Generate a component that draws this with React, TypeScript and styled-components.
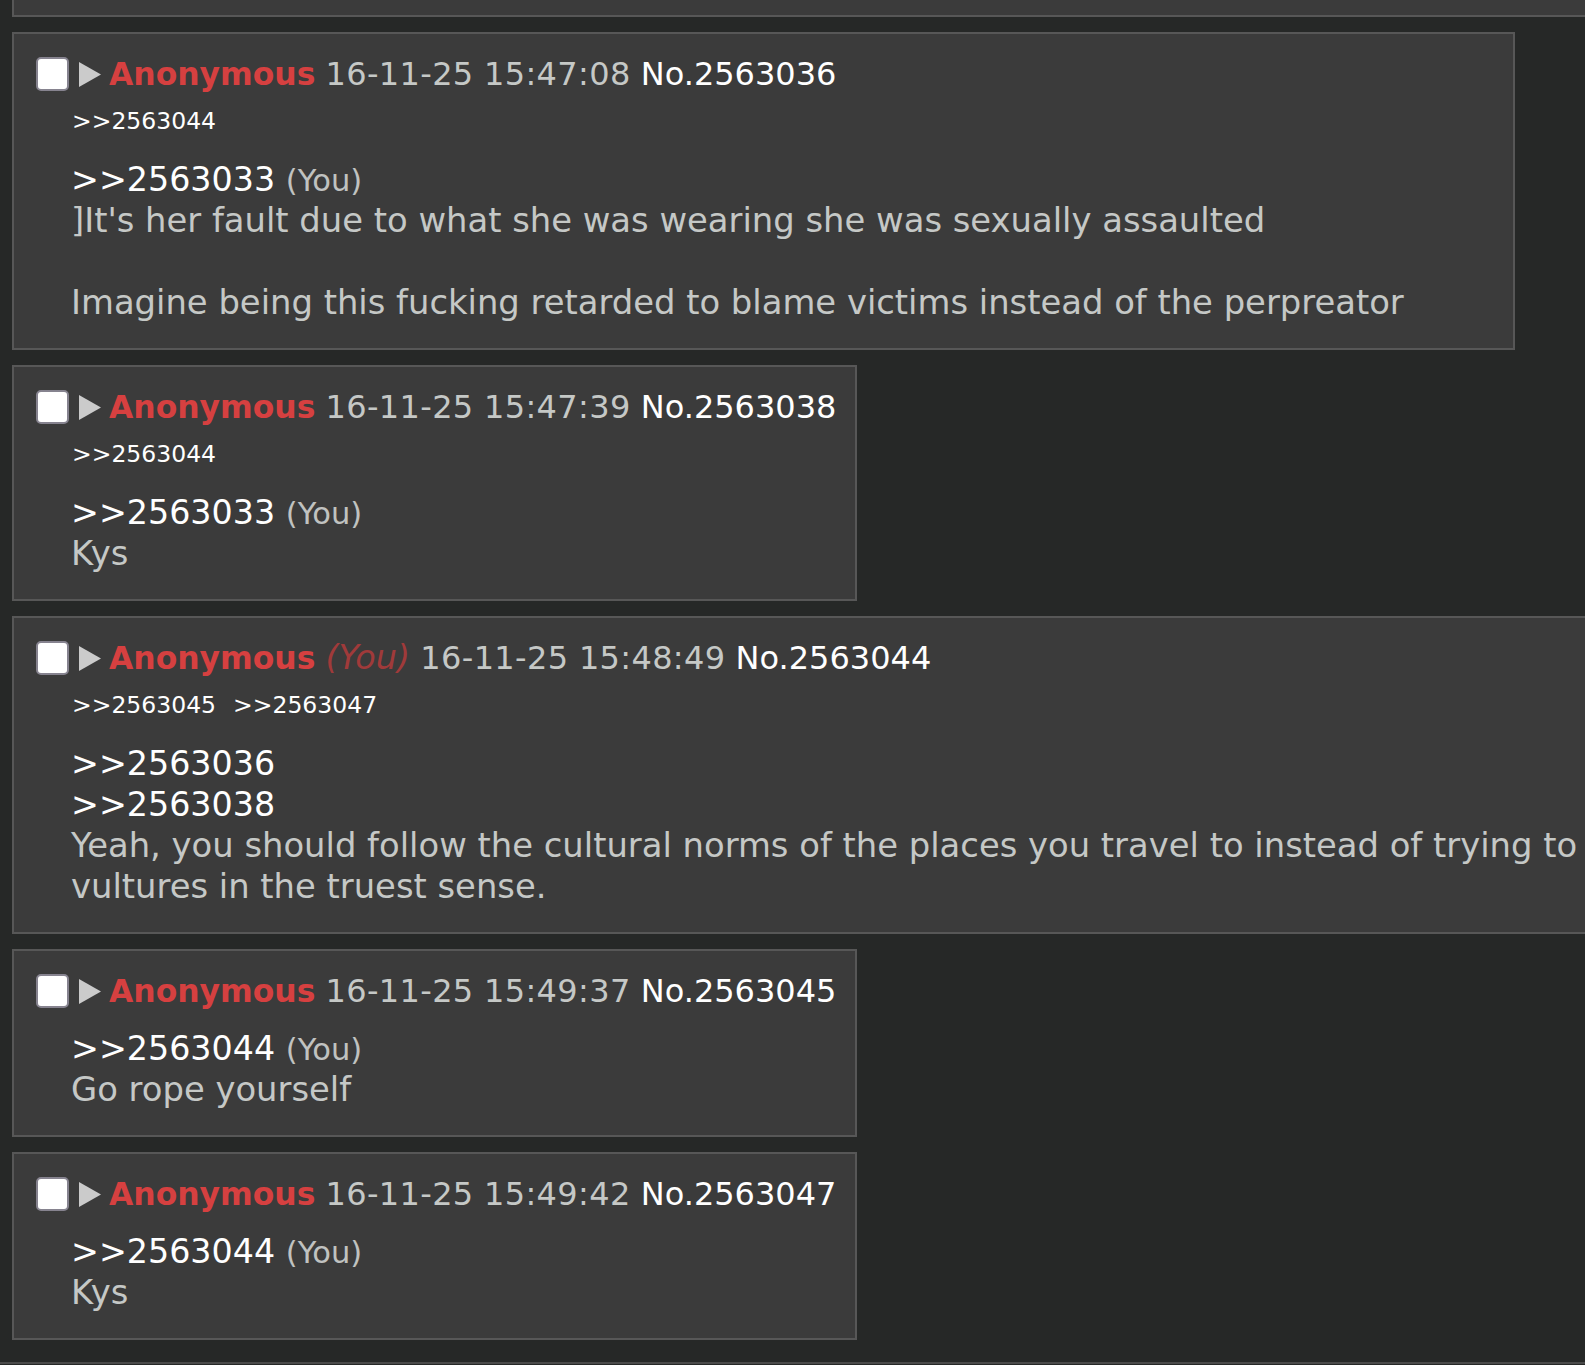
import React from "react";
import styled, { createGlobalStyle } from "styled-components";

const GlobalStyle = createGlobalStyle`
  html, body {
    margin: 0;
    padding: 0;
    background: #262827;
    overflow: hidden;
  }
  body {
    font-family: "DejaVu Sans", Verdana, sans-serif;
  }
`;

const Page = styled.div`
  display: flex;
  flex-direction: column;
  align-items: stretch;
  width: 1585px;
  min-height: 1365px;
`;

const Thread = styled.div`
  display: flex;
  flex-direction: column;
  align-items: flex-start;
  padding-left: 12px;
`;

const TopPanel = styled.div`
  width: 1700px;
  height: 15px;
  flex-shrink: 0;
  background: #3b3b3b;
  border-left: 2px solid #575757;
  border-bottom: 2px solid #575757;
`;

const Post = styled.div<{ $width: number }>`
  box-sizing: border-box;
  flex-shrink: 0;
  width: ${(p) => p.$width}px;
  margin-top: 15px;
  padding: 20px 0 25px 0;
  background: #3b3b3b;
  border: 2px solid #575757;
`;

const Header = styled.div`
  display: flex;
  align-items: center;
  height: 40px;
  padding-left: 22px;
  font-size: 32px;
  line-height: 40px;
  white-space: nowrap;
`;

const Checkbox = styled.span`
  box-sizing: border-box;
  flex-shrink: 0;
  width: 33px;
  height: 34px;
  margin-right: 10px;
  background: #ffffff;
  border: 2px solid #86838f;
  border-radius: 5px;
`;

const Arrow = styled.svg`
  flex-shrink: 0;
  width: 22px;
  height: 25px;
  margin-right: 8px;
`;

const Name = styled.span`
  font-size: 31.4px;
  font-weight: bold;
  color: #d64040;
`;

const NameYou = styled.span`
  font-size: 33.5px;
  font-style: italic;
  color: #a03a3a;
`;

const DateText = styled.span`
  color: #c5c8c6;
  letter-spacing: 0.35px;
`;

const PostNo = styled.span`
  color: #ffffff;
`;

const Backlinks = styled.div`
  display: flex;
  gap: 17px;
  height: 30px;
  margin-top: 12px;
  padding-left: 58px;
  font-size: 23.5px;
  line-height: 30px;
  color: #ffffff;
  white-space: nowrap;
`;

const Body = styled.div<{ $afterLinks: boolean }>`
  margin-top: ${(p) => (p.$afterLinks ? 23 : 17)}px;
  padding-left: 57px;
  font-size: 33.8px;
  line-height: 41px;
  color: #c5c8c6;
  white-space: nowrap;
`;

const QuoteLink = styled.span`
  font-size: 33.3px;
  color: #ffffff;
`;

const YouMark = styled.span`
  font-size: 30.5px;
  line-height: 1;
  color: #c0c2c0;
`;

const Rule = styled.div`
  margin-top: 22px;
  height: 0;
  border-top: 2px solid #4a4a4a;
`;

type Line = { quote?: string; you?: boolean; text?: string };

type PostData = {
  width: number;
  you?: boolean;
  date: string;
  no: string;
  backlinks: string[];
  lines: Line[];
};

const posts: PostData[] = [
  {
    width: 1503,
    date: "16-11-25 15:47:08",
    no: "2563036",
    backlinks: ["2563044"],
    lines: [
      { quote: "2563033", you: true },
      { text: "]It's her fault due to what she was wearing she was sexually assaulted" },
      { text: "" },
      { text: "Imagine being this fucking retarded to blame victims instead of the perpreator" },
    ],
  },
  {
    width: 845,
    date: "16-11-25 15:47:39",
    no: "2563038",
    backlinks: ["2563044"],
    lines: [{ quote: "2563033", you: true }, { text: "Kys" }],
  },
  {
    width: 2000,
    you: true,
    date: "16-11-25 15:48:49",
    no: "2563044",
    backlinks: ["2563045", "2563047"],
    lines: [
      { quote: "2563036" },
      { quote: "2563038" },
      {
        text: "Yeah, you should follow the cultural norms of the places you travel to instead of trying to",
      },
      { text: "vultures in the truest sense." },
    ],
  },
  {
    width: 845,
    date: "16-11-25 15:49:37",
    no: "2563045",
    backlinks: [],
    lines: [{ quote: "2563044", you: true }, { text: "Go rope yourself" }],
  },
  {
    width: 845,
    date: "16-11-25 15:49:42",
    no: "2563047",
    backlinks: [],
    lines: [{ quote: "2563044", you: true }, { text: "Kys" }],
  },
];

function BodyLine({ line }: { line: Line }) {
  if (line.quote) {
    return (
      <div>
        <QuoteLink>&gt;&gt;{line.quote}</QuoteLink>
        {line.you && (
          <>
            {" "}
            <YouMark>(You)</YouMark>
          </>
        )}
      </div>
    );
  }
  return <div>{line.text === "" ? "\u00a0" : line.text}</div>;
}

function PostView({ post }: { post: PostData }) {
  const hasLinks = post.backlinks.length > 0;
  return (
    <Post $width={post.width}>
      <Header>
        <Checkbox />
        <Arrow viewBox="0 0 22 25">
          <polygon points="0,0 22,12.5 0,25" fill="#cbcbcb" />
        </Arrow>
        <span>
          <Name>Anonymous</Name>
          {post.you && (
            <>
              {" "}
              <NameYou>(You)</NameYou>
            </>
          )}{" "}
          <DateText>{post.date}</DateText> <PostNo>No.{post.no}</PostNo>
        </span>
      </Header>
      {hasLinks && (
        <Backlinks>
          {post.backlinks.map((b) => (
            <span key={b}>&gt;&gt;{b}</span>
          ))}
        </Backlinks>
      )}
      <Body $afterLinks={hasLinks}>
        {post.lines.map((l, i) => (
          <BodyLine key={i} line={l} />
        ))}
      </Body>
    </Post>
  );
}

export default function App() {
  return (
    <>
      <GlobalStyle />
      <Page>
        <Thread>
          <TopPanel />
          {posts.map((p) => (
            <PostView key={p.no} post={p} />
          ))}
        </Thread>
        <Rule />
      </Page>
    </>
  );
}
